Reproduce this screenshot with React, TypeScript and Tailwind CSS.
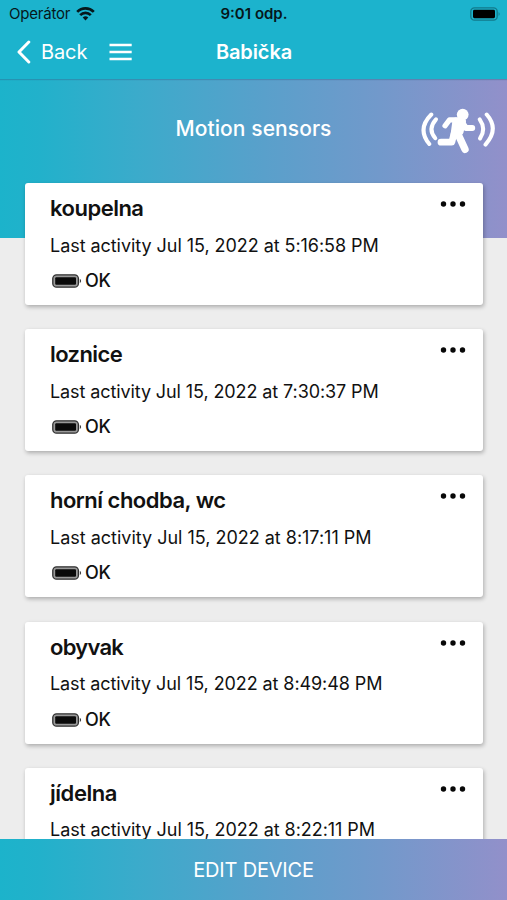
import React from "react";

type Sensor = { name: string; time: string; nameSpacing: string; timeSpacing: string };

const sensors: Sensor[] = [
  { name: "koupelna", time: "5:16:58 PM", nameSpacing: "tracking-[-0.5px]", timeSpacing: "tracking-[-0.05px]" },
  { name: "loznice", time: "7:30:37 PM", nameSpacing: "tracking-[-0.6px]", timeSpacing: "tracking-[-0.1px]" },
  { name: "horní chodba, wc", time: "8:17:11 PM", nameSpacing: "tracking-[-0.5px]", timeSpacing: "tracking-[-0.01px]" },
  { name: "obyvak", time: "8:49:48 PM", nameSpacing: "tracking-[-0.75px]", timeSpacing: "tracking-[-0.09px]" },
  { name: "jídelna", time: "8:22:11 PM", nameSpacing: "tracking-[-0.45px]", timeSpacing: "tracking-[-0.05px]" },
];

function WifiIcon() {
  return (
    <svg className="ml-[6px] h-[14px] w-[19px]" viewBox="0 0 19 14" fill="none" stroke="#06171b" strokeWidth="2.7">
      <path d="M1.2 4.9 A11.6 11.6 0 0 1 17.8 4.9" />
      <path d="M4.2 8.1 A7.5 7.5 0 0 1 14.8 8.1" />
      <path d="M6.7 10.6 A4 4 0 0 1 12.3 10.6 L9.5 13.5Z" fill="#06171b" stroke="none" />
    </svg>
  );
}

function StatusBattery() {
  return (
    <svg className="h-[14px] w-[31px]" viewBox="0 0 31 14">
      <rect x="0.8" y="0.8" width="26.4" height="12.4" rx="3.6" fill="none" stroke="#127a8b" strokeWidth="1.3" />
      <rect x="3" y="2.8" width="22" height="8.4" rx="1.4" fill="#000" />
      <path d="M28.6 5 Q30.6 7 28.6 9Z" fill="#127a8b" />
    </svg>
  );
}

function SensorBattery() {
  return (
    <svg className="h-[14px] w-[30px]" viewBox="0 0 30 14">
      <rect x="0.8" y="0.8" width="25.6" height="12.4" rx="3.8" fill="#999" stroke="#303030" strokeWidth="1.3" />
      <rect x="3.2" y="3.2" width="20.8" height="7.6" rx="1" fill="#0a0a0a" />
      <path d="M27.8 4.8 Q30.4 7 27.8 9.2Z" fill="#303030" />
    </svg>
  );
}

function MotionIcon() {
  return (
    <svg className="h-[52px] w-[78px]" viewBox="420 105 78 52" fill="none" stroke="#fff" strokeLinecap="round" strokeLinejoin="round">
      <g strokeWidth="4">
        <path d="M431.3 114.5 Q416.8 129 429.3 144" />
        <path d="M436 119.3 Q427.3 129 435.3 138.2" />
        <path d="M479.7 119.3 Q486.5 129 480 138.5" />
        <path d="M486.7 114.5 Q499.5 129 485.5 144.6" />
      </g>
      <circle cx="462.7" cy="114.6" r="5.9" fill="#fff" stroke="none" />
      <path d="M459 119.9 L449.5 119.9 L445 125.8" strokeWidth="5.2" />
      <path d="M461 121 L466 128 L472.3 128" strokeWidth="5.8" />
      <path d="M455.5 120.5 L463 121.5 L460.5 132 L453.5 135Z" fill="#fff" strokeWidth="6" />
      <path d="M454.5 132 L451.8 142.2 L441 142.2" strokeWidth="6.8" />
      <path d="M457.5 133 L465 149.3" strokeWidth="7.4" />
    </svg>
  );
}

function SensorCard({ sensor }: { sensor: Sensor }) {
  return (
    <article className="flex h-[122px] shrink-0 flex-col rounded-[3px] bg-white pl-[25px] pr-[17px] text-[#111] shadow-[1px_2px_4px_rgba(0,0,0,0.28)]">
      <div className="flex justify-between pt-[10px]">
        <h2 className={"text-[22px] leading-[30px] font-semibold whitespace-nowrap " + sensor.nameSpacing}>{sensor.name}</h2>
        <svg className="mt-[8px] h-[6px] w-[26px]" viewBox="0 0 26 6" fill="#080808">
          <circle cx="3.5" cy="3" r="2.7" />
          <circle cx="13" cy="3" r="2.7" />
          <circle cx="22.5" cy="3" r="2.7" />
        </svg>
      </div>
      <p className={"mt-[10.5px] text-[18px] leading-[24px] whitespace-nowrap " + sensor.timeSpacing}>Last activity Jul 15, 2022 at {sensor.time}</p>
      <div className="mt-[11.5px] flex h-[24px] items-center pl-[2px]">
        <SensorBattery />
        <span className="ml-[3px] text-[18px] leading-[24px] font-medium tracking-[-0.2px]">OK</span>
      </div>
    </article>
  );
}

export default function App() {
  return (
    <div className="flex h-[900px] w-[507px] flex-col overflow-hidden bg-[#ededed] font-['Inter','Liberation_Sans',sans-serif]">
      <header className="relative h-[79px] shrink-0 bg-[#1cb3cd] shadow-[0_1px_1px_rgba(50,100,140,0.4)]">
        <div className="grid h-[27px] grid-cols-[1fr_auto_1fr] items-center pl-[9px] pr-[6px] text-[#06171b]">
          <div className="flex items-center">
            <span className="text-[15px] leading-[20px] tracking-[-0.2px]">Operátor</span>
            <WifiIcon />
          </div>
          <span className="-translate-x-[1px] text-[15px] leading-[20px] font-semibold">9:01 odp.</span>
          <div className="flex justify-end"><StatusBattery /></div>
        </div>
        <nav className="grid h-[50px] grid-cols-[1fr_auto_1fr] items-center pl-[16px] pr-[15px] text-white">
          <div className="flex items-center">
            <svg className="h-[24px] w-[16px]" viewBox="0 0 16 24" fill="none" stroke="currentColor" strokeWidth="3" strokeLinecap="round" strokeLinejoin="round">
              <path d="M12.8 2 L3 12 L12.8 22" />
            </svg>
            <span className="ml-[9px] text-[20px] leading-[26px] tracking-[-0.1px]">Back</span>
            <svg className="ml-[22px] h-[18px] w-[24px]" viewBox="0 0 24 18" stroke="currentColor" strokeWidth="2.6">
              <path d="M0.5 2H22.7M0.5 9H22.7M0.5 16H22.7" />
            </svg>
          </div>
          <h1 className="text-[20px] leading-[26px] font-semibold tracking-[-0.1px]">Babička</h1>
          <span />
        </nav>
      </header>
      <main className="flex min-h-0 flex-1 flex-col overflow-hidden">
        <section className="grid h-[159px] shrink-0 grid-cols-[1fr_auto_1fr] items-start bg-[linear-gradient(90deg,#1cb3cb_0%,#22b1cb_8%,#3babcb_27%,#59a0cb_52%,#7299cb_75%,#9290ca_100%)] pl-[9px] pr-[9px] text-white">
          <span />
          <h2 className="pt-[36px] text-[21px] leading-[28px] font-medium tracking-[0.08px]">Motion sensors</h2>
          <div className="flex justify-end pt-[26px]"><MotionIcon /></div>
        </section>
        <div className="mt-[-55px] flex flex-col gap-[24.2px] pl-[25px] pr-[24px]">
          {sensors.map((sensor) => <SensorCard key={sensor.name} sensor={sensor} />)}
        </div>
      </main>
      <footer className="flex h-[61px] shrink-0 items-center justify-center bg-[linear-gradient(90deg,#1cb3cb_0%,#22b1cb_8%,#3babcb_27%,#59a0cb_52%,#7299cb_75%,#9290ca_100%)] text-white">
        <button className="text-[20px] leading-[28px] tracking-[-0.2px]">EDIT DEVICE</button>
      </footer>
    </div>
  );
}
